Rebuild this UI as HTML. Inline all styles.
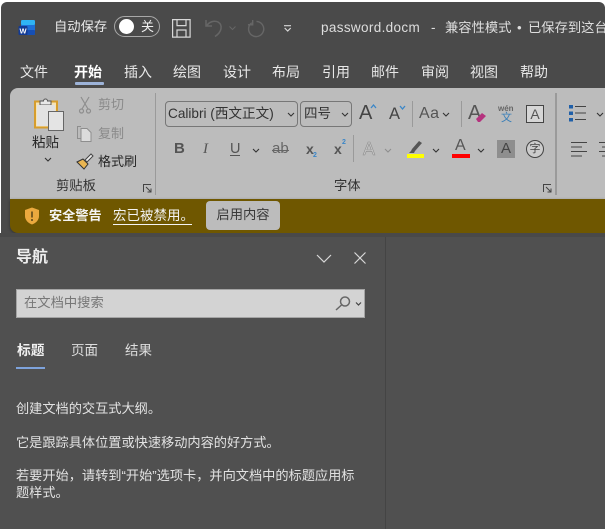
<!DOCTYPE html>
<html><head><meta charset="utf-8"><style>
html,body{margin:0;padding:0;background:#fff}
#p{position:relative;width:605px;height:529px;overflow:hidden;background:#fff;font-family:"Liberation Sans","Noto Sans CJK SC",sans-serif;filter:blur(.35px)}
#w{position:absolute;left:1px;top:2px;width:604px;height:527px;background:#4a4a4a;border-radius:6px 6px 0 0}
.t{position:absolute;white-space:nowrap;line-height:18px;font-size:13px;color:#e8e8e8}
.d{color:#262626}
.g{color:#8a8a8a}
svg{position:absolute;overflow:visible}
.sep{position:absolute;width:1px;background:#9a9a9a}
</style></head><body><div id="p"><div id="w"></div>
<!-- word icon -->
<svg style="left:18px;top:19px" width="18" height="18" viewBox="0 0 18 18"><rect x="3" y="1" width="14" height="15" rx="1.500" fill="#1e70d8"/><rect x="3" y="1" width="14" height="5" rx="1.500" fill="#2fb4f4"/><rect x="3" y="11" width="14" height="5" rx="1" fill="#164fb4"/><rect x="0.500" y="7" width="9" height="9" rx="1" fill="#123a94"/><text x="5" y="14.500" font-size="7.500" font-weight="bold" fill="#fff" text-anchor="middle" font-family="Liberation Sans">W</text></svg>
<div class="t" style="left:54px;top:18px;font-size:13.300px">自动保存</div>
<div style="position:absolute;left:114px;top:16px;width:46px;height:21px;border:1.500px solid #a8a8a8;border-radius:12px;box-sizing:border-box"></div>
<div style="position:absolute;left:119px;top:19px;width:15px;height:15px;background:#fff;border-radius:50%"></div>
<div class="t" style="left:141px;top:18px;font-size:13px;color:#f0f0f0">关</div>
<svg style="left:172px;top:19px" width="19" height="19" viewBox="0 0 19 19" fill="none" stroke="#d8d8d8" stroke-width="1.200"><path d="M.6.6h17.500v17.500H.6zM5 .6v6h9v-6M5 18v-7h9v7"/></svg>
<svg style="left:205px;top:19px" width="18" height="19" viewBox="0 0 18 19" fill="none" stroke="#666" stroke-width="1.500"><path d="M1 1v6h6M1.500 7C4 3 9 1 13 3c5 3 4 10-3 14.500"/></svg>
<svg style="left:229px;top:26px" width="7" height="4" fill="none" stroke="#666"><path d="M.5.5l3 3 3-3"/></svg>
<svg style="left:247px;top:20px" width="18" height="18" viewBox="0 0 19 19" fill="none" stroke="#666" stroke-width="1.500"><path d="M10 1.500a8 8 0 1 1-5 1.500M6 0v5H1"/></svg>
<svg style="left:284px;top:25px" width="8" height="7" fill="none" stroke="#d8d8d8" stroke-width="1.200"><path d="M0 .7h7M.7 3l3 3 3-3"/></svg>
<div class="t" style="left:321px;top:19px;font-size:13.500px;letter-spacing:.35px;color:#dedede">password.docm</div>
<div class="t" style="left:431px;top:19px;font-size:13.500px;color:#dedede">-</div>
<div class="t" style="left:445px;top:19px;font-size:13.300px;color:#dedede">兼容性模式</div>
<div class="t" style="left:517px;top:19px;font-size:13.300px;color:#dedede">•</div>
<div class="t" style="left:528px;top:19px;font-size:13.300px;color:#dedede">已保存到这台电脑</div>
<!-- tabs -->
<div class="t" style="left:20px;top:63px;font-size:14px">文件</div>
<div class="t" style="left:74px;top:63px;font-size:14px;font-weight:bold;color:#fff">开始</div>
<div style="position:absolute;left:75px;top:82px;width:29px;height:3px;background:#9db3d8;border-radius:1px"></div>
<div class="t" style="left:124px;top:63px;font-size:14px">插入</div>
<div class="t" style="left:173px;top:63px;font-size:14px">绘图</div>
<div class="t" style="left:223px;top:63px;font-size:14px">设计</div>
<div class="t" style="left:272px;top:63px;font-size:14px">布局</div>
<div class="t" style="left:322px;top:63px;font-size:14px">引用</div>
<div class="t" style="left:371px;top:63px;font-size:14px">邮件</div>
<div class="t" style="left:421px;top:63px;font-size:14px">审阅</div>
<div class="t" style="left:470px;top:63px;font-size:14px">视图</div>
<div class="t" style="left:520px;top:63px;font-size:14px">帮助</div>
<!-- ribbon -->
<div style="position:absolute;left:10px;top:88px;width:595px;height:112px;background:#bcbcbc;border-radius:8px 0 0 0"></div>
<!-- message bar -->
<div style="position:absolute;left:10px;top:199px;width:595px;height:34px;background:#6f5700;border-radius:0 0 0 8px;box-shadow:0 1px 3px rgba(0,0,0,.35)"></div>
<!-- paste -->
<svg style="left:33px;top:97px" width="32" height="34" viewBox="0 0 32 34"><rect x="2" y="4.500" width="22" height="26" fill="#f6e3b4" stroke="#d69d2d" stroke-width="2"/><path d="M7 8V4h3.500a2 2 0 0 1 4 0H18v4z" fill="#e8e8e8" stroke="#555"/><rect x="4" y="8" width="18" height="21" fill="#e2e2e2"/><rect x="15.500" y="14.500" width="15" height="19" fill="#e4e4e4" stroke="#666"/></svg>
<div class="t d" style="left:32px;top:134px;font-size:13.500px">粘贴</div>
<svg style="left:44px;top:157px" width="8" height="5" fill="none" stroke="#333" stroke-width="1.100"><path d="M1 1l3 3 3-3"/></svg>
<svg style="left:79px;top:97px" width="12" height="17" fill="none" stroke="#8e8e8e" stroke-width="1.200"><path d="M2 0l7 12M10 0L3 12"/><circle cx="2.500" cy="14" r="2"/><circle cx="9.500" cy="14" r="2"/></svg>
<div class="t g" style="left:98px;top:96px;font-size:13px">剪切</div>
<svg style="left:76px;top:125px" width="17" height="17" fill="none" stroke="#8e8e8e"><path d="M5 1.500H1.500v12H5"/><path d="M5 3.500h6l4 4v9H5z" fill="#dcdcdc"/></svg>
<div class="t g" style="left:98px;top:125px;font-size:13px">复制</div>
<svg style="left:76px;top:153px" width="18" height="18" viewBox="0 0 18 18"><path d="M1 9l6-3 5 5-4 5z" fill="#e9b552" stroke="#333"/><path d="M9 7l6-6 2 2-6 6z" fill="#eee" stroke="#444"/></svg>
<div class="t d" style="left:98px;top:153px;font-size:13px">格式刷</div>
<div class="t d" style="left:56px;top:177px;font-size:13.300px;color:#333">剪贴板</div>
<svg style="left:143px;top:184px" width="9" height="9" fill="none" stroke="#444"><path d="M.5 8V.5H8M3 3l5 5M8 4.500V8H4.500"/></svg>
<div class="sep" style="left:155px;top:93px;height:102px"></div>
<!-- font -->
<div style="position:absolute;left:165px;top:101px;width:133px;height:26px;border:1px solid #777;border-radius:4px;box-sizing:border-box"></div>
<div class="t" style="left:168px;top:105px;font-size:13.600px;color:#333">Calibri (西文正文)</div>
<svg style="left:287px;top:112px" width="8" height="5" fill="none" stroke="#333" stroke-width="1.100"><path d="M1 1l3 3 3-3"/></svg>
<div style="position:absolute;left:300px;top:101px;width:52px;height:26px;border:1px solid #777;border-radius:4px;box-sizing:border-box"></div>
<div class="t" style="left:304px;top:105px;font-size:13.500px;color:#333">四号</div>
<svg style="left:341px;top:112px" width="8" height="5" fill="none" stroke="#333" stroke-width="1.100"><path d="M1 1l3 3 3-3"/></svg>
<div class="t" style="left:359px;top:102px;font-size:20px;line-height:22px;color:#444">A</div>
<svg style="left:370px;top:104px" width="7" height="5" fill="none" stroke="#3a86c8" stroke-width="1.300"><path d="M1 4l2.500-3L6 4"/></svg>
<div class="t" style="left:389px;top:104px;font-size:16.500px;line-height:20px;color:#444">A</div>
<svg style="left:399px;top:105px" width="7" height="5" fill="none" stroke="#3a86c8" stroke-width="1.300"><path d="M1 1l2.500 3L6 1"/></svg>
<div class="sep" style="left:412px;top:101px;height:26px"></div>
<div class="t" style="left:419px;top:104px;font-size:16px;line-height:20px;color:#555;letter-spacing:.5px">Aa</div>
<svg style="left:442px;top:112px" width="8" height="5" fill="none" stroke="#333" stroke-width="1.100"><path d="M1 1l3 3 3-3"/></svg>
<div class="sep" style="left:461px;top:101px;height:26px"></div>
<div class="t" style="left:468px;top:102px;font-size:20px;line-height:22px;color:#555">A</div>
<svg style="left:476px;top:112px" width="11" height="11"><path d="M0 7l6-6 4 3-6 6H2z" fill="#b5327e"/></svg>
<div class="t" style="left:498px;top:104px;font-size:8px;line-height:10px;color:#666;font-weight:bold">wén</div>
<div class="t" style="left:501px;top:112px;font-size:11px;line-height:13px;color:#3a7fb8">文</div>
<div style="position:absolute;left:526px;top:105px;width:18px;height:18px;border:1px solid #444;background:#d6d6d6;box-sizing:border-box;color:#555;font-size:14px;line-height:16px;text-align:center">A</div>
<div class="sep" style="left:555px;top:93px;height:102px;width:2px"></div>
<svg style="left:569px;top:105px" width="18" height="17"><g fill="#1f5fa8"><rect x="0" y="0" width="4" height="3.500"/><rect x="0" y="6.500" width="4" height="3.500"/><rect x="0" y="13" width="4" height="3.500"/></g><g stroke="#444" stroke-width="1"><path d="M6 1.500h11M6 8h11M6 14.500h11"/></g></svg>
<svg style="left:596px;top:112px" width="8" height="5" fill="none" stroke="#333" stroke-width="1.100"><path d="M1 1l3 3 3-3"/></svg>
<div class="t" style="left:174px;top:140px;font-size:15px;font-weight:bold;color:#555">B</div>
<div class="t" style="left:203px;top:140px;font-size:15px;font-style:italic;font-family:'Liberation Serif',serif;color:#555">I</div>
<div class="t" style="left:230px;top:140px;font-size:14.500px;color:#555">U</div>
<div style="position:absolute;left:230px;top:155px;width:10px;height:1px;background:#555"></div>
<svg style="left:252px;top:148px" width="8" height="5" fill="none" stroke="#333" stroke-width="1.100"><path d="M1 1l3 3 3-3"/></svg>
<div class="t" style="left:272px;top:140px;font-size:15px;color:#666">ab</div>
<div style="position:absolute;left:272px;top:150px;width:17px;height:1px;background:#666"></div>
<div class="t" style="left:306px;top:140px;font-size:14px;font-weight:bold;color:#555">x</div>
<div class="t" style="left:313px;top:147px;font-size:7px;font-weight:bold;color:#3a86c8">2</div>
<div class="t" style="left:334px;top:140px;font-size:14px;font-weight:bold;color:#555">x</div>
<div class="t" style="left:342px;top:134px;font-size:7px;font-weight:bold;color:#3a86c8">2</div>
<div class="sep" style="left:353px;top:135px;height:27px"></div>
<div class="t" style="left:363px;top:139px;font-size:18px;line-height:20px;color:#c8c8c8;-webkit-text-stroke:.6px #8e8e8e">A</div>
<svg style="left:384px;top:148px" width="8" height="5" fill="none" stroke="#8e8e8e" stroke-width="1.100"><path d="M1 1l3 3 3-3"/></svg>
<svg style="left:407px;top:140px" width="18" height="14"><path d="M4 11l-2 2h5l1-2 7-8-3-2-7 8z" fill="#555"/></svg>
<div style="position:absolute;left:407px;top:154px;width:17px;height:4px;background:#ff0"></div>
<svg style="left:432px;top:148px" width="8" height="5" fill="none" stroke="#333" stroke-width="1.100"><path d="M1 1l3 3 3-3"/></svg>
<div class="t" style="left:455px;top:137px;font-size:16px;color:#555">A</div>
<div style="position:absolute;left:452px;top:154px;width:18px;height:4px;background:#f00"></div>
<svg style="left:477px;top:148px" width="8" height="5" fill="none" stroke="#333" stroke-width="1.100"><path d="M1 1l3 3 3-3"/></svg>
<div style="position:absolute;left:497px;top:140px;width:18px;height:18px;background:#8e8e8e;color:#444;font-size:15px;line-height:18px;text-align:center">A</div>
<div style="position:absolute;left:526px;top:140px;width:18px;height:18px;border:1px solid #444;border-radius:50%;box-sizing:border-box;color:#444;font-size:11px;line-height:16px;text-align:center;background:#ccc">字</div>
<svg style="left:571px;top:142px" width="34" height="15" stroke="#444" stroke-width="1"><path d="M0 .5h16M0 5h11M0 9.500h16M0 14h11M28 .5h6M31 5h3M28 9.500h6M31 14h3"/></svg>
<div class="t d" style="left:334px;top:177px;font-size:13.300px;color:#333">字体</div>
<svg style="left:543px;top:184px" width="9" height="9" fill="none" stroke="#444"><path d="M.5 8V.5H8M3 3l5 5M8 4.500V8H4.500"/></svg>
<!-- warning -->
<svg style="left:24px;top:207px" width="16" height="18" viewBox="0 0 16 18"><path d="M8 0.500l7 2.500v6c0 4-3 7-7 8.500C4 16 1 13 1 9V3z" fill="#eba93e"/><rect x="7" y="4.500" width="2" height="6" fill="#7a5c20"/><rect x="7" y="12" width="2" height="2" fill="#7a5c20"/></svg>
<div class="t" style="left:49px;top:207px;font-size:13.200px;font-weight:bold;color:#f4f4f4">安全警告</div>
<div class="t" style="left:113px;top:207px;font-size:13.500px;color:#f4f4f4;border-bottom:1px solid #f4f4f4;line-height:17px;width:79px">宏已被禁用。</div>
<div style="position:absolute;left:206px;top:201px;width:74px;height:29px;background:#bcbcbc;border-radius:4px;color:#3a3a3a;font-size:13.300px;line-height:28px;text-align:center">启用内容</div>
<!-- nav -->
<div style="position:absolute;left:0;top:236px;width:385px;height:293px;background:#505050"></div>
<div style="position:absolute;left:385px;top:236px;width:220px;height:293px;background:#505050;border-left:1px solid #444"></div>
<div style="position:absolute;left:0;top:233px;width:605px;height:4px;background:#494949"></div>
<div class="t" style="left:16px;top:249px;font-size:16px;font-weight:bold;color:#eee">导航</div>
<svg style="left:316px;top:254px" width="16" height="10" fill="none" stroke="#d8d8d8" stroke-width="1.200"><path d="M1 1l7 7 7-7"/></svg>
<svg style="left:354px;top:252px" width="12" height="12" fill="none" stroke="#d8d8d8" stroke-width="1.200"><path d="M.5.5l11 11M11.500.5l-11 11"/></svg>
<div style="position:absolute;left:16px;top:289px;width:349px;height:29px;background:#d3d3d3;border:1px solid #a4a4a4;box-sizing:border-box"></div>
<div class="t" style="left:24px;top:294px;font-size:13.300px;color:#777">在文档中搜索</div>
<svg style="left:335px;top:296px" width="16" height="15" fill="none" stroke="#666" stroke-width="1.500"><circle cx="10" cy="5.500" r="4.500"/><path d="M6.500 9L1 14"/></svg>
<svg style="left:355px;top:302px" width="7" height="4" fill="none" stroke="#444" stroke-width="1.200"><path d="M1 .5l2.500 2.500L6 .5"/></svg>
<div class="t" style="left:17px;top:342px;font-size:13.700px;font-weight:bold;color:#f0f0f0">标题</div>
<div style="position:absolute;left:16px;top:367px;width:29px;height:2px;background:#7ea3dc"></div>
<div class="t" style="left:71px;top:342px;font-size:13.500px;color:#dedede">页面</div>
<div class="t" style="left:125px;top:342px;font-size:13.500px;color:#dedede">结果</div>
<div class="t" style="left:16px;top:400px;font-size:13.200px;color:#e2e2e2">创建文档的交互式大纲。</div>
<div class="t" style="left:16px;top:434px;font-size:13.200px;color:#e2e2e2">它是跟踪具体位置或快速移动内容的好方式。</div>
<div class="t" style="left:16px;top:467px;font-size:13.200px;color:#e2e2e2">若要开始，请转到“开始”选项卡，并向文档中的标题应用标</div>
<div class="t" style="left:16px;top:484px;font-size:13.200px;color:#e2e2e2">题样式。</div>
</div></body></html>
